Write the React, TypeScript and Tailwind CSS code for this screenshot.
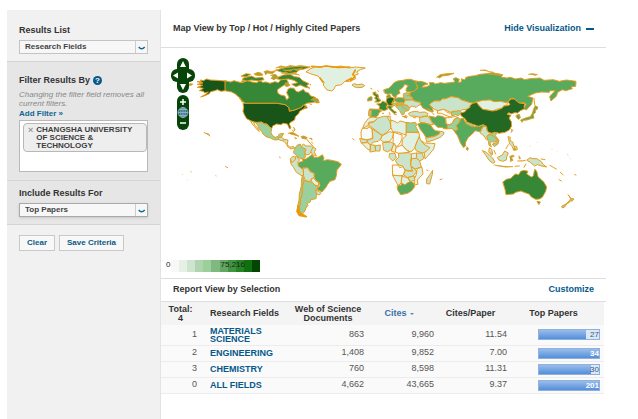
import React from "react";

const DARKEST = "#195519";
const DARK = "#236823";
const STRONG = "#368736";
const MID = "#58aa5c";
const SOFT = "#9ad09b";
const PALE = "#c9e4ca";
const FAINT = "#e0f1e1";
const BLANK = "#f8fbf8";

type Region = [fill: string, points: string];

// North America, drawn in thirds of a map unit from the upper left corner.
const NORTH_AMERICA: Region[] = [
  [STRONG, "195,92 212,96 222,92 232,95 245,98 262,92 276,96 290,98 300,92 308,97 318,96 330,100 345,95 355,98 362,90 375,84 382,92 385,98 374,104 368,108 356,116 352,120 354,130 362,135 375,138 380,150 387,142 380,128 384,118 390,114 402,115 408,124 416,126 430,118 436,126 445,128 452,138 466,142 472,152 465,156 440,160 425,170 438,166 442,174 425,178 415,176 405,180 388,184 386,172 375,164 350,160 255,160 245,152 241,144 235,140 226,132 215,126 195,122"],
  [DARKEST, "112,95 124,95 121,90 130,92 140,87 150,90 172,91 195,93 195,122 183,124 172,119 165,122 152,125 148,131 135,137 122,141 139,132 145,126 134,129 130,124 118,122 130,115 112,112 128,106 112,103 128,99"],
  [DARKEST, "255,160 350,160 375,164 386,172 388,184 405,180 415,176 425,172 430,165 437,169 432,176 419,184 416,191 406,200 404,210 390,218 388,222 393,234 389,237 382,222 370,220 362,224 350,222 338,228 335,236 328,230 321,222 313,221 304,216 290,218 275,214 260,206 253,194 249,184 251,172 249,161"],
  [SOFT, "287,217 304,217 313,222 321,224 328,231 335,237 333,248 338,257 346,262 354,259 358,252 371,250 366,260 360,263 356,269 344,270 331,264 318,260 308,251 305,243 298,238 294,228"],
  [FAINT, "273,213 281,216 284,225 291,232 298,244 291,239 284,230 277,222"],
  [PALE, "357,262 365,262 372,268 368,273 357,269"],
  [PALE, "372,268 384,270 382,284 375,278 370,273"],
  [PALE, "382,284 390,292 400,289 404,294 393,297 382,289"],
  [STRONG, "347,85 370,75 390,73 403,80 418,82 428,92 447,101 440,107 450,115 434,111 421,105 408,110 395,103 413,98 402,91 385,87 365,89"],
  [STRONG, "250,84 274,78 287,84 308,82 312,89 295,93 275,90 260,93 248,90"],
  [STRONG, "244,78 258,71 272,73 260,80"],
  [STRONG, "348,60 371,54 381,52 405,50 425,49 451,51 433,57 417,60 410,67 387,71 369,68"],
  [SOFT, "404,296 411,286 421,282 424,290 439,299 434,307 436,322 423,327 411,319 401,309"],
  [PALE, "424,290 430,282 438,288 454,288 462,295 454,304 448,313 436,315 435,306 438,299"],
  [PALE, "460,291 468,297 463,306 469,318 460,317 453,306"],
];

const NORTHERN_ISLANDS = [
  "282,72 294,67 305,70 309,75 298,77 286,75",
  "312,65 321,62 334,65 347,62 338,71 323,69 316,74",
  "332,76 347,73 354,81 342,89 333,85 338,80",
  "348,54 363,48 377,51 390,47 407,49 422,47 438,49",
  "366,70 377,66 389,73 404,70 418,75",
  "370,60 392,63 400,57 412,62 426,54",
  "376,99 384,99 390,106 380,110 374,106",
  "246,93 253,90 249,99 244,95",
  "453,150 462,144 474,147 478,158 469,159 465,155",
  "385,250 397,247 408,253 417,259 404,255 392,252",
  "423,260 431,258 442,263 437,267 426,265",
  "449,265 455,265 456,270",
  "404,263 410,265 408,267",
  "238,145 244,150 250,156 245,155",
  "90,101 98,102 94,106 82,105",
  "133,248 138,250 146,252 149,258",
  "401,232 405,239 402,243",
  "397,240 401,246",
  "455,276 458,280",
  "358,321 361,323",
  "197,350 203,353",
];

const SOUTH_AMERICA: Region[] = [
  [PALE, "392,27 401,24 409,19 419,30 413,36 416,46 428,52 432,78 423,76 409,67 401,53 393,41"],
  [PALE, "392,25 399,19 407,22 405,30 396,37"],
  [MID, "417,37 429,34 427,27 438,27 445,22 456,14 463,23 477,21 487,14 492,24 489,32 503,29 521,32 535,36 544,43 538,52 531,59 529,77 525,89 510,94 503,103 498,112 486,126 470,118 480,107 478,98 467,91 462,80 464,71 451,65 446,56 431,53 425,56 415,48"],
  [PALE, "431,55 443,53 450,65 461,69 463,82 453,88 449,95 436,92 431,78"],
  [FAINT, "454,88 461,84 468,93 476,98 475,108 464,105 457,98"],
  [SOFT, "433,92 449,95 458,98 465,106 475,110 468,118 472,128 469,139 468,146 453,149 450,157 441,160 444,166 438,174 435,183 427,192 418,188 417,173 422,162 421,148 427,131 427,112"],
  [SOFT, "428,77 432,92 427,110 426,132 421,148 420,163 417,176 420,190 412,184 413,167 417,151 418,132 424,108 425,86"],
  [PALE, "469,121 478,125 483,130 477,135 469,130"],
];

// Europe, Asia and Africa share the second origin, east of Newfoundland.
const OLD_WORLD: Region[] = [
  [FAINT, "-11,65 0,57 17,50 30,52 48,48 70,52 92,48 115,54 138,51 166,54 151,59 140,66 145,72 133,76 137,86 119,94 105,94 94,104 77,107 72,117 66,123 51,120 40,106 42,96 33,88 24,78 4,72"],
  [PALE, "127,104 133,101 143,104 156,102 164,107 157,112 142,113 132,110"],
  [STRONG, "190,127 198,126 197,132 204,133 206,145 213,151 207,156 194,156 200,150 194,145 197,139 190,134"],
  [MID, "174,145 181,140 186,141 186,151 174,153"],
  [MID, "222,119 236,115 244,108 252,98 263,93 278,91 293,88 303,88 313,92 324,94 318,101 323,113 312,124 298,126 288,123 289,115 295,107 284,103 279,112 267,121 270,130 261,134 257,144 249,138 243,130 234,133 224,129"],
  [MID, "231,137 239,133 242,140 238,146 231,143"],
  [STRONG, "201,162 212,160 218,153 228,158 234,161 229,170 233,178 222,182 207,177 209,169"],
  [MID, "180,177 204,178 215,183 207,188 205,195 199,201 184,201 177,195"],
  [SOFT, "178,181 185,181 183,199 177,198"],
  [DARK, "231,145 242,141 253,145 253,154 246,159 251,164 246,168 235,166 229,155"],
  [MID, "253,146 265,143 281,144 285,151 282,158 265,158 255,153"],
  [SOFT, "281,131 290,128 297,129 299,138 310,145 304,150 286,149 281,142"],
  [SOFT, "246,159 266,159 282,160 276,165 258,165 249,168"],
  [STRONG, "229,170 239,167 248,170 243,175 254,184 260,187 253,191 244,183 236,175"],
  [SOFT, "258,168 271,165 284,165 293,168 299,175 295,182 285,184 281,194 275,193 269,182 262,175"],
  [PALE, "282,158 287,151 307,150 315,154 331,157 334,163 324,167 319,172 306,168 299,173 290,165 282,165"],
  [PALE, "296,190 304,186 319,184 329,187 345,186 354,191 352,198 337,199 331,202 315,199 302,198"],
  [MID, "319,95 332,94 344,97 354,102 341,106 336,112 350,110 360,105 358,98 370,98 377,102 391,98 404,100 419,98 435,96 430,86 438,83 448,88 445,98 455,95 454,86 464,90 468,82 480,79 496,77 510,73 530,71 545,68 557,70 578,74 573,81 590,84 602,82 616,87 633,84 644,89 660,86 690,84 702,91 730,89 748,94 769,90 798,94 797,109 784,110 787,116 767,122 757,119 743,127 739,139 723,153 719,140 735,122 720,122 718,127 695,126 676,129 653,139 669,144 665,163 649,180 641,176 648,163 642,158 628,160 611,145 600,146 596,155 584,157 572,154 552,155 541,150 519,153 500,155 489,160 477,157 455,150 444,143 423,140 408,146 396,147 391,153 374,153 366,159 359,165 367,175 370,185 356,183 339,174 332,164 332,157 319,154 308,149 308,143 300,137 300,127 312,124 324,113 318,101"],
  [PALE, "359,163 366,157 374,153 391,153 396,147 408,146 423,140 444,143 455,150 477,157 489,160 480,170 473,177 455,180 449,188 430,184 420,187 408,180 401,178 385,182 375,179"],
  [BLANK, "384,182 401,178 409,185 419,190 430,185 436,188 428,196 420,201 405,195 394,190 384,190"],
  [SOFT, "430,184 449,182 456,188 445,197 436,194 428,198 424,193"],
  [MID, "358,198 366,200 377,202 383,197 397,199 407,205 407,219 415,226 413,237 402,236 396,232 383,232 373,222 366,216"],
  [BLANK, "408,203 422,203 434,199 443,202 432,208 428,218 419,225 410,222"],
  [SOFT, "413,226 426,221 433,209 443,202 451,207 448,217 441,226 443,240 431,242 427,236 413,236"],
  [PALE, "330,202 352,199 357,202 365,216 371,224 361,223 344,219 331,217"],
  [MID, "324,222 332,219 344,219 362,225 368,235 376,242 390,244 388,252 375,258 362,261 348,263 342,252 332,240"],
  [PALE, "348,264 372,260 387,253 391,244 401,246 402,252 391,262 371,270 352,276"],
  [FAINT, "499,157 517,151 540,150 552,155 572,154 584,157 593,158 589,167 581,168 577,174 560,178 547,183 531,180 518,178 508,168"],
  [DARK, "452,189 465,185 470,178 479,173 481,165 489,160 499,157 508,168 518,178 531,180 547,183 560,181 577,174 581,168 590,167 600,164 594,155 604,147 613,147 627,159 645,161 642,169 644,176 631,182 623,189 614,188 603,192 597,188 591,193 603,196 597,204 604,215 605,228 598,240 585,247 567,250 558,247 545,250 532,245 530,230 520,224 505,229 488,223 472,218 465,206 454,198"],
  [MID, "440,226 449,216 452,206 461,205 465,216 482,224 494,230 509,229 520,225 524,230 515,236 511,246 503,244 495,242 490,249 475,262 467,276 466,288 461,293 452,280 443,258 437,249 432,244 443,239"],
  [SOFT, "466,214 478,219 491,225 487,230 470,222"],
  [PALE, "520,230 528,229 531,242 540,251 534,256 536,267 529,269 522,258 511,249"],
  [SOFT, "531,258 540,253 552,258 562,266 562,273 552,277 546,274 541,280 544,291 537,286 535,275"],
  [SOFT, "540,253 553,247 560,250 556,257 567,271 564,282 553,290 547,282 561,278 563,271 552,259"],
  [MID, "671,177 676,167 684,172 680,180 676,177 676,188 669,194 672,204 660,207 651,210 640,211 636,217 632,210 649,203 661,200 667,190"],
  [MID, "619,196 628,193 631,204 626,208 620,203"],
  [PALE, "539,294 545,298 548,310 545,316 537,307"],
  [PALE, "518,302 529,307 548,324 555,336 549,340 537,331 528,317"],
  [PALE, "563,322 577,315 584,303 595,309 590,321 589,330 578,334 567,330"],
  [PALE, "595,260 601,262 600,271 608,276 612,289 620,289 622,299 611,301 607,290 600,283"],
  [PALE, "651,330 660,323 669,326 681,326 694,335 700,344 710,351 694,348 682,344 674,348 662,338"],
];

const AFRICA: Region[] = [
  [FAINT, "177,204 189,200 205,205 190,215 176,217 174,227 158,235 163,222"],
  [PALE, "204,204 220,199 234,199 240,214 243,234 230,248 216,256 188,234 176,226 178,219 191,216"],
  [FAINT, "235,198 241,199 240,207 245,211 240,215 234,206"],
  [FAINT, "243,211 252,213 263,219 270,213 289,218 289,256 266,247 248,245 243,233"],
  [SOFT, "290,217 301,219 316,217 321,224 317,229 326,247 290,247"],
  [BLANK, "158,235 174,235 175,230 187,237 187,266 169,269 154,266 153,247"],
  [PALE, "187,237 216,256 215,264 205,274 188,277 183,285 173,281 173,270 188,266"],
  [FAINT, "217,257 239,245 251,248 247,264 239,274 221,276 212,270"],
  [BLANK, "251,247 276,255 276,266 271,278 261,290 249,278 250,260"],
  [FAINT, "289,247 327,248 329,262 321,274 315,293 303,306 290,300 276,285 277,268 288,257"],
  [PALE, "328,260 333,273 347,284 365,291 351,304 337,309 319,303 315,293"],
  [FAINT, "336,273 344,279 365,280 375,281 371,297 355,316 345,327 343,309 360,293 343,284"],
  [PALE, "150,266 171,270 172,278 155,279"],
  [FAINT, "156,279 173,278 181,285 181,302 171,296 164,289"],
  [PALE, "183,284 195,286 197,303 181,306"],
  [PALE, "197,287 211,285 210,303 198,303"],
  [PALE, "219,278 243,276 252,282 244,299 232,306 222,301"],
  [FAINT, "252,280 259,292 256,307 245,304"],
  [BLANK, "259,292 276,285 287,298 298,306 277,310 265,310 257,306"],
  [PALE, "240,310 255,310 259,324 248,333 238,323"],
  [PALE, "267,310 298,308 306,317 301,334 304,350 308,363 285,360 278,348 263,344 256,332 265,323"],
  [FAINT, "306,311 322,309 320,325 305,326"],
  [PALE, "321,309 338,310 341,326 329,333 320,325"],
  [PALE, "306,326 320,325 329,333 334,351 315,357 303,348"],
  [BLANK, "248,345 264,345 269,353 279,350 285,361 280,376 263,378 249,375"],
  [PALE, "286,362 308,364 303,350 315,357 320,366 309,378 293,383 282,375"],
  [FAINT, "323,355 336,352 339,372 322,390 324,403 314,405 312,389 318,376"],
  [FAINT, "249,376 278,378 274,400 264,406 259,397"],
  [FAINT, "277,379 292,383 301,396 285,405 274,402"],
  [PALE, "295,382 313,378 314,391 302,394"],
  [MID, "263,407 273,406 276,400 285,405 292,399 302,394 311,399 314,410 305,422 293,430 272,434 263,420"],
  [PALE, "368,362 367,373 359,402 350,401 350,387 361,372"],
];

const OCEANIA: Region[] = [
  [STRONG, "99,156 109,148 123,145 130,137 137,132 146,134 152,124 162,121 174,124 170,132 184,141 190,138 194,118 200,123 204,140 215,150 222,157 230,171 227,184 217,202 208,207 197,208 184,201 177,192 165,188 153,183 137,187 130,192 108,194 105,178"],
  [STRONG, "202,214 211,216 207,223"],
  [SOFT, "295,195 302,205 312,207 306,214 302,212 296,219 290,222 285,230 277,234 275,229 289,221 299,211 302,206"],
];

const EASTERN_ISLANDS = [
  "380,82 391,74 410,71 432,70 418,75 397,78 388,84",
  "511,61 525,60 538,65 551,67",
  "656,73 667,71 682,74 673,76",
  "532,71 555,74 576,76",
  "0,103 2,104",
  "0,162 5,163",
  "238,188 240,194",
  "253,193 259,194",
  "217,190 221,190",
  "300,137 289,137",
  "182,115 186,117",
  "203,122 206,124",
  "276,198 284,202 291,204 285,197 292,199",
  "310,202 317,204",
  "471,290 475,295 473,301 468,297",
  "604,237 608,241 604,247",
  "554,345 566,348 588,351 608,350",
  "599,320 607,316 613,318 604,323 609,331 601,334",
  "595,284 588,296",
  "613,291 618,300 610,298",
  "627,318 628,327 632,324",
  "623,333 637,333 646,331",
  "615,349 628,348",
  "672,145 674,165",
  "540,308 548,312",
  "557,312 552,301",
  "350,360 354,362",
  "390,389 396,387",
  "128,266 132,269",
  "693,327 705,329",
  "720,346 730,352 739,357",
  "751,367 759,374",
  "747,389 754,393",
  "794,374 798,375",
  "642,352 648,342",
  "-11,266 0,280 9,288",
];

function Shapes({ regions, islands = [] }: { regions: Region[]; islands?: string[] }) {
  return (
    <>
      {regions.map(([fill, points]) => (
        <polygon key={points} points={points} fill={fill} />
      ))}
      {islands.map((points) => (
        <polyline key={points} points={points} fill="#9aa541" />
      ))}
    </>
  );
}

function WorldMap() {
  return (
    <svg viewBox="161 48 445 212" className="block w-full" role="img" aria-label="World map of cites">
      <g stroke="#e89d1e" strokeWidth="3" strokeLinejoin="round" strokeLinecap="round">
        <g transform="translate(160 50) scale(.333333)">
          <Shapes regions={NORTH_AMERICA} islands={NORTHERN_ISLANDS} />
        </g>
        <g transform="translate(160 150) scale(.333333)">
          <Shapes regions={SOUTH_AMERICA} />
          <path d="M415 168l-4 16 7 12 21 4-16-10" fill="#eb980b" stroke="#eb980b" strokeWidth="5" />
          <path d="M91 65l4 1M166 77l3 1M82 89l1 1M67 73l1 1" strokeOpacity=".5" />
        </g>
        <g transform="translate(310 50) scale(.333333)">
          <Shapes regions={AFRICA} />
          <Shapes regions={OLD_WORLD} islands={EASTERN_ISLANDS} />
          <path d="M202 142l6 8M254 147l-7 8M275 170l17 10M261 159v8M353 176l12 7M362 183l10 11" fill="none" />
          <path d="M5 49l25 2 18-3 36 4 35-1M30 84l9 13M136 60l-8 14 7 5-13 14M125 85l-16 8" fill="none" stroke="#eb980b" strokeWidth="5" />
        </g>
        <g transform="translate(470 130) scale(.333333)">
          <Shapes regions={OCEANIA} />
          <path d="M179 49h2M201 37h1M245 58h2M261 63h1M291 71l4 7M301 86h1" strokeOpacity=".3" />
        </g>
      </g>
      <g fill="#074407">
        <rect x="177" y="58" width="12" height="35" rx="6" />
        <rect x="171" y="69" width="24" height="13" rx="6" />
        <rect x="177" y="95" width="12" height="35" rx="6" />
      </g>
      <path d="M183 61l3 6h-6zM183 90l-3-6h6zM173 75.500l5-3v6zM192 75.500l-5-3v6z" fill="#fff" />
      <path d="M180 102h6M183 99v6M180 123h6" stroke="#fff" strokeWidth="1.500" />
      <g fill="none" stroke="#94b9d5" strokeWidth=".8">
        <circle cx="183" cy="112.500" r="5" fill="#38716d" />
        <ellipse cx="183" cy="112.500" rx="2.300" ry="5" />
        <path d="M178 112.500h10M179 109.500h8M179 115.500h8M183 107.500v10" />
      </g>
    </svg>
  );
}

const LEGEND = [
  "bg-[#f8f8f8]",
  "bg-[#e5f1e5]",
  "bg-[#cfe4ce]",
  "bg-[#b1d4b0]",
  "bg-[#9bd09b]",
  "bg-[#80b980]",
  "bg-[#62a862]",
  "bg-[#409540]",
  "bg-[#248524]",
  "bg-[#107010]",
  "bg-[#034503]",
];

const ROWS = [
  { rank: 1, field: "MATERIALS SCIENCE", docs: "863", cites: "9,960", ratio: "11.54", top: "27", fill: 78, height: "h-5" },
  { rank: 2, field: "ENGINEERING", docs: "1,408", cites: "9,852", ratio: "7.00", top: "34", fill: 100, height: "h-4" },
  { rank: 3, field: "CHEMISTRY", docs: "760", cites: "8,598", ratio: "11.31", top: "30", fill: 87, height: "h-4" },
  { rank: 0, field: "ALL FIELDS", docs: "4,662", cites: "43,665", ratio: "9.37", top: "201", fill: 100, height: "h-4" },
];

function Picker({ id, value, active = false }: { id: string; value: string; active?: boolean }) {
  return (
    <div className={"relative mt-1 h-[14px] border bg-[#f7f7f7] " + (active ? "border-[#a9a9a9] shadow-sm" : "border-[#c4c4c4]")}>
      <select id={id} className="block h-full w-full appearance-none bg-transparent pl-[5px] text-[8px] leading-3 font-bold text-[#444]">
        <option>{value}</option>
      </select>
      <svg viewBox="0 0 12 12" className="pointer-events-none absolute top-0 right-0 h-3 w-3 border-l border-[#ccc]" aria-hidden="true">
        <path d="M3 6q3 4 6.500 0" fill="none" stroke="#0d6794" strokeWidth="1.600" />
      </svg>
    </div>
  );
}

function Sidebar() {
  return (
    <aside className="w-[154px] shrink-0 border-r border-[#e3e3e3] bg-[#f1f1f1]">
      <section className="border-b border-[#d5d5d5] px-3 pt-[14px] pb-[7px]">
        <label htmlFor="results-list" className="block leading-3 font-bold">Results List</label>
        <Picker id="results-list" value="Research Fields" />
      </section>
      <section className="border-b border-[#d5d5d5] bg-[#e6e6e6] px-3 pt-3 pb-2">
        <h2 className="flex items-center gap-[3px] leading-3 font-bold">
          Filter Results By
          <button type="button" aria-label="Help" className="h-[9px] w-[9px] rounded-full bg-[#07588a] text-[8px] leading-[9px] font-bold text-white">?</button>
        </h2>
        <p className="mt-1 -mr-2 text-[8px] leading-[9px] text-[#888] italic">Changing the filter field removes all<br />current filters.</p>
        <a href="#filter" className="block text-[8px] leading-3 font-bold text-[#0d6794]">Add Filter »</a>
        <div className="h-[52px] border border-[#b9b9b9] bg-white pt-[2px] pl-[3px]">
          <div className="flex h-[29px] gap-[3px] rounded-sm border border-[#b8b8b8] bg-[#eee] pl-1 text-[8px] leading-[8px] font-bold text-[#3d3d3d]">
            <button type="button" aria-label="Remove filter" className="h-3 text-[9px] leading-[10px] font-bold text-[#999]">×</button>
            <span className="pt-[2px]">CHANGSHA UNIVERSITY<br />OF SCIENCE &amp;<br />TECHNOLOGY</span>
          </div>
        </div>
      </section>
      <section className="border-b border-[#d5d5d5] bg-[#e6e6e6] px-3 pt-[6px] pb-[7px]">
        <label htmlFor="include" className="block leading-3 font-bold">Include Results For</label>
        <Picker id="include" value="Top Papers" active />
      </section>
      <div className="flex gap-1 px-3 pt-[10px]">
        <button type="button" className="h-4 border border-[#c9c9c9] bg-[#f8f8f8] px-[7px] text-[8px] font-bold text-[#0d5882]">Clear</button>
        <button type="button" className="h-4 border border-[#c9c9c9] bg-[#f8f8f8] px-[7px] text-[8px] font-bold text-[#0d5882]">Save Criteria</button>
      </div>
    </aside>
  );
}

function Report() {
  return (
    <table className="mr-[2px] w-[calc(100%-2px)] table-fixed border-collapse">
      <colgroup>
        <col className="w-[43px]" />
        <col className="w-[88px]" />
        <col className="w-[72px]" />
        <col className="w-[70px]" />
        <col className="w-[73px]" />
        <col />
      </colgroup>
      <thead className="bg-[#f4f4f4]">
        <tr className="h-[23px] leading-[9px] whitespace-nowrap">
          <th className="pr-1">Total:<br />4</th>
          <th className="pl-[6px] text-left">Research Fields</th>
          <th>Web of Science<br />Documents</th>
          <th className="text-[#3b70a9]" aria-sort="descending">
            <button type="button" className="inline-flex items-center gap-[3px]">
              Cites
              <span className="border-x-2 border-t-2 border-x-transparent border-t-[#4e8acb]" />
            </button>
          </th>
          <th>Cites/Paper</th>
          <th className="pr-1">Top Papers</th>
        </tr>
      </thead>
      <tbody className="bg-[#fafafa] text-right text-[#555]">
        {ROWS.map((row) => (
          <tr key={row.rank} className={"border-b border-[#ececec] " + row.height}>
            <td className="pr-[7px]">{row.rank}</td>
            <td className="pr-6 pl-[6px] text-left leading-[8px] font-bold">
              <a href="#field" className="text-[#07588a]">{row.field}</a>
            </td>
            <td>{row.docs}</td>
            <td>{row.cites}</td>
            <td>{row.ratio}</td>
            <td className="pr-1 pl-[31px]">
              <div className="relative h-[11px] border border-[#8fb1dc] bg-[#dce8f6]">
                <div className="h-full bg-linear-to-b from-[#9abdea] to-[#538edb]" style={{ width: `${row.fill}%` }} />
                <span className={"absolute top-0 right-0 text-[8px] leading-[10px] " + (row.fill === 100 ? "font-bold text-white" : "text-[#36597f]")}>{row.top}</span>
              </div>
            </td>
          </tr>
        ))}
      </tbody>
    </table>
  );
}

export default function App() {
  return (
    <div className="flex min-h-screen bg-white pt-[10px] pr-8 pl-[7px] font-['Liberation_Sans',Arial,sans-serif] text-[9px] text-[#333]">
      <Sidebar />
      <main className="min-w-0 flex-1">
        <header className="flex h-[38px] items-center justify-between border-b border-[#dedede] pr-3 pl-3 font-bold">
          <h1>Map View by Top / Hot / Highly Cited Papers</h1>
          <button type="button" className="flex items-center gap-[5px] text-[#07588a]">
            Hide Visualization
            <span className="h-[2px] w-2 bg-[#07588a]" />
          </button>
        </header>
        <WorldMap />
        <div className="flex h-[18px] items-start pl-[5px] text-[8px] leading-[9px] text-[#222]">
          <span className="w-[5px]">0</span>
          <div className="relative flex h-3 w-[89px]">
            {LEGEND.map((shade) => (
              <span key={shade} className={"flex-1 " + shade} />
            ))}
            <span className="absolute top-0 right-[15px]">75,216</span>
          </div>
        </div>
        <div className="flex h-6 items-center justify-between border-y border-[#dedede] px-3 font-bold">
          <h2>Report View by Selection</h2>
          <a href="#customize" className="text-[#07588a]">Customize</a>
        </div>
        <Report />
      </main>
    </div>
  );
}
